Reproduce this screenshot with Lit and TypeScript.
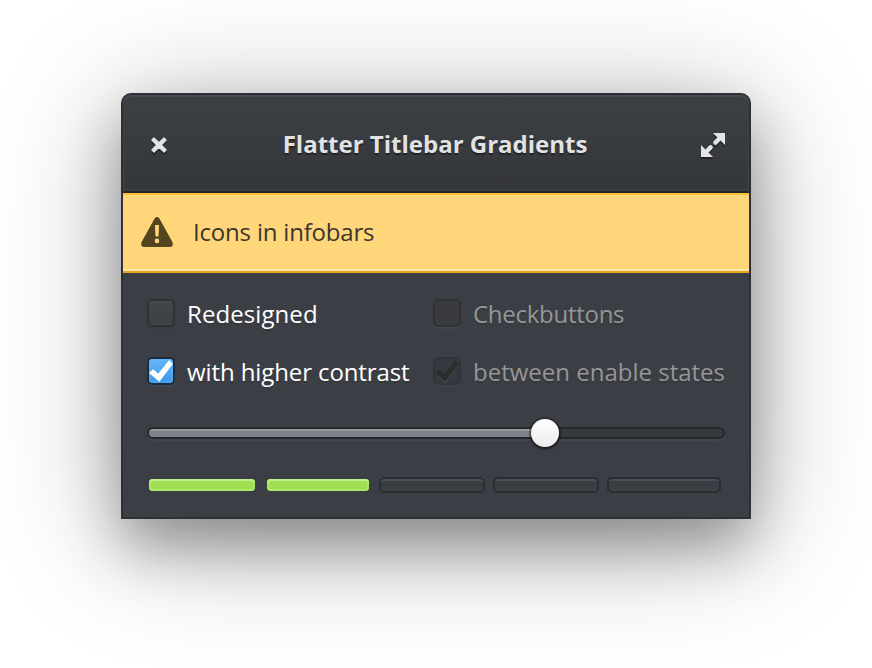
import { LitElement, html, css, svg } from "lit";
import { customElement, property } from "lit/decorators.js";
import { classMap } from "lit/directives/class-map.js";

const closeIcon = svg`<path d="M3 .9 L8 5.7 L13 .9 L15.1 3 L10.3 8 L15.1 13 L13 15.1 L8 10.3 L3 15.1 L.9 13 L5.7 8 L.9 3 Z" stroke-width="1.2" stroke-linejoin="round"/>`;

@customElement("check-button")
class CheckButton extends LitElement {
  @property({ type: Boolean }) checked = false;
  @property({ type: Boolean }) disabled = false;
  @property() label = "";

  static styles = css`
    :host { display: block; }
    .row { display: flex; align-items: center; gap: 12px; height: 28px; color: #fff; }
    .row.disabled { color: #949698; }
    .box {
      box-sizing: border-box; width: 28px; height: 28px; flex: none;
      border: 2px solid #2f3135; border-radius: 5px;
      background: linear-gradient(#42464b, #3c4045);
      box-shadow: inset 0 2px #454a50, inset 0 -1px #434b52, 0 2px 2px rgba(0, 0, 0, .06);
    }
    .checked .box {
      border-color: #1c2d3e;
      background: linear-gradient(#64b5fb, #3d98e6);
      box-shadow: inset 0 0 0 2px rgba(100, 190, 255, .3), 0 2px #3d4650;
    }
    .disabled .box { border-color: #303234; background: #3a3b3e; box-shadow: 0 2px #3d454d; }
    .disabled.checked .box {
      border-color: #2d3640; background: #363a3e;
      box-shadow: inset 0 0 0 2px #34383c, 0 2px #3b444e;
    }
    svg { display: block; width: 24px; height: 24px; overflow: visible; }
    .mark { fill: #fff; }
    .echo { fill: none; }
    .disabled .mark { fill: #2b2d2f; }
    .disabled .echo { fill: #44494d; }
    .text { font: 24px/32px "Open Sans", "Noto Sans", sans-serif; white-space: nowrap; text-shadow: 0 2px rgba(0, 0, 0, .12); letter-spacing: inherit; position: relative; top: 1px; }
  `;

  render() {
    return html`
      <div class=${classMap({ row: true, checked: this.checked, disabled: this.disabled })}>
        <div class="box">
          ${this.checked
            ? html`<svg viewBox="0 0 24 24">
                <path class="echo" d="M0 14 L4 10 L9.5 15 L20 1.5 L23.5 5.5 L10.5 25 Z" />
                <path class="mark" d="M0 14 L4 10.2 L9.3 14.6 L20.2 1 L23.8 5 L10.3 22.8 Z" />
              </svg>`
            : null}
        </div>
        <span class="text">${this.label}</span>
      </div>
    `;
  }
}

@customElement("app-root")
class AppRoot extends LitElement {
  private levels = [
    { width: 106, on: true },
    { width: 102, on: true },
    { width: 106, on: false },
    { width: 106, on: false },
    { width: 114, on: false },
  ];

  static styles = css`
    :host {
      display: flex; box-sizing: border-box; width: 872px; height: 668px;
      padding: 93px 121px 0; align-items: flex-start; background: #fff; overflow: hidden;
      font: 24px/32px "Open Sans", "Noto Sans", sans-serif;
    }
    .window {
      box-sizing: border-box; width: 630px; height: 426px; border: 2px solid #2f3033;
      border-radius: 10px 10px 0 0; background: #3c3e45; display: flex; flex-direction: column;
      box-shadow: 0 28px 56px rgba(0, 0, 0, .3), 0 18px 128px rgba(0, 0, 0, .32);
    }
    .titlebar {
      box-sizing: border-box; height: 98px; display: flex; align-items: center;
      justify-content: space-between; padding: 4px 24px 0 28px;
      border-bottom: 2px solid #24272a; border-radius: 8px 8px 0 0;
      background: linear-gradient(#3c4045, #343639);
      box-shadow: inset 0 2px #424b55, inset 2px 0 #3b3f44, inset -2px 0 #3b3f44, inset 0 -2px #383b3f;
    }
    .title { color: #e2e2e2; font-weight: 700; text-shadow: 0 2px 1px rgba(0, 0, 0, .4); margin: -2px 0 0 2px; }
    .icon { display: block; fill: #e4e4e4; stroke: #e4e4e4; filter: drop-shadow(0 2px 0 rgba(0, 0, 0, .35)); overflow: visible; }
    .infobar {
      box-sizing: border-box; height: 80px; display: flex; align-items: center; gap: 20px;
      padding: 0 18px 2px; color: #3b352b; background: #ffd77a; letter-spacing: -.19px;
      border-top: 2px solid #fdc038; border-bottom: 2px solid #eaa51c; box-shadow: inset 0 -2px #ffe7a9;
    }
    .content { flex: 1; padding: 26px 24px 0; display: flex; flex-direction: column; }
    .checks { display: grid; grid-template-columns: 286px auto; row-gap: 30px; }
    .checks :nth-child(1) { letter-spacing: .08px; }
    .checks :nth-child(2) { letter-spacing: -.27px; }
    .checks :nth-child(3) { letter-spacing: -.1px; }
    .track {
      box-sizing: border-box; height: 12px; width: 578px; margin-top: 42px; border: 2px solid #25272b;
      border-radius: 6px; background: #36383e; box-shadow: 0 2px #40454f; display: flex; align-items: center;
    }
    .fill {
      height: 8px; width: 382px; flex: none; border-radius: 4px 0 0 4px;
      background: linear-gradient(#96989d 0 2px, #808289 2px);
    }
    .knob {
      width: 28px; height: 28px; flex: none; border-radius: 50%;
      background: linear-gradient(#fff, #ececec);
      box-shadow: 0 0 0 2px rgba(0, 0, 0, .28), 0 2px 3px 1px rgba(0, 0, 0, .3);
    }
    .levels { display: flex; align-items: center; height: 16px; margin: 38px 0 0 2px; gap: 8px; }
    .level {
      box-sizing: border-box; height: 16px; border: 2px solid #2b2d31; border-radius: 5px;
      background: linear-gradient(#363b40, #3b3f44); box-shadow: inset 0 2px #47505a, inset 0 -1px #3d4248;
    }
    .level.on {
      height: 12px; border: 0; border-radius: 4px; background: #a0df51; margin-right: 4px;
      box-shadow: inset 0 2px #c1f08b, inset 0 0 0 2px #aae865;
    }
    .level.on + .level:not(.on) { margin-left: -2px; }
  `;

  render() {
    return html`
      <div class="window">
        <header class="titlebar">
          <svg class="icon" width="16" height="16" viewBox="0 0 16 16">${closeIcon}</svg>
          <span class="title">Flatter Titlebar Gradients</span>
          <svg class="icon" width="24" height="24" viewBox="0 0 24 24">
            <path stroke="none" d="M12 0 H24 V12 Z M0 12 L12 24 H0 Z" />
            <path fill="none" stroke-width="4.4" stroke-linecap="round" d="M18 6 L14.4 9.6 M6 18 L9.6 14.4" />
          </svg>
        </header>
        <div class="infobar">
          <svg width="32" height="30" viewBox="0 0 32 30">
            <path fill="#54451f" fill-rule="evenodd" d="M13.6 1.5 Q16 -1.4 18.4 1.5 L31.4 25 Q33 29.4 29 30 H3 Q-1 29.4 .6 25 Z M14 8 L14.4 19 Q16 20.2 17.6 19 L18 8 Z M16 21.6 A2.3 2.3 0 1 0 16 26.2 A2.3 2.3 0 1 0 16 21.6 Z" />
          </svg>
          <span>Icons in infobars</span>
        </div>
        <main class="content">
          <div class="checks">
            <check-button label="Redesigned"></check-button>
            <check-button label="Checkbuttons" disabled></check-button>
            <check-button label="with higher contrast" checked></check-button>
            <check-button label="between enable states" checked disabled></check-button>
          </div>
          <div class="track"><div class="fill"></div><div class="knob"></div></div>
          <div class="levels">
            ${this.levels.map(
              (l) => html`<div class=${classMap({ level: true, on: l.on })} style="width:${l.width}px"></div>`
            )}
          </div>
        </main>
      </div>
    `;
  }
}
